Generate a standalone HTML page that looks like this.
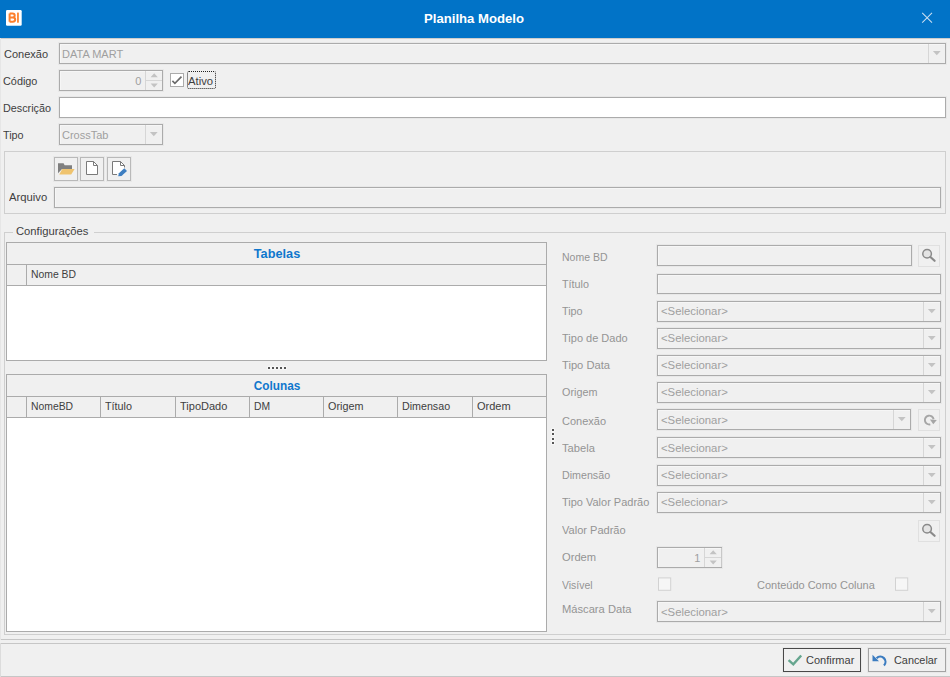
<!DOCTYPE html>
<html>
<head>
<meta charset="utf-8">
<title>Planilha Modelo</title>
<style>
html,body{margin:0;padding:0;}
body{width:950px;height:677px;overflow:hidden;background:#f0f0f0;font-family:"Liberation Sans",sans-serif;font-size:12px;color:#3c3c3c;position:relative;}
*{box-sizing:border-box;}
.a{position:absolute;}
.t{position:absolute;white-space:nowrap;line-height:14px;height:14px;}
.tb{left:0;top:0;width:950px;height:38px;background:#0173c7;}
.in{border:1px solid #ababab;background:#f0f0f0;box-shadow:0 0 0 1px rgba(0,0,0,0.03),inset 1px 1px 0 #f6f6f6;}
.in.w{background:#fff;box-shadow:0 0 0 1px rgba(0,0,0,0.03);}
.grp{border:1px solid #cfcfcf;}
.btn{border:1px solid #b9b9b9;background:#f0f0f0;box-shadow:0 0 0 1px rgba(0,0,0,0.03);}
.sb{border:1px solid #e0e0e0;background:#f0f0f0;}
.ln{background:#c6c6c6;}
.grid{border:1px solid #ababab;background:#fff;}
.cb{border:1px solid #d4d4d4;background:#f6f6f6;}
.dot{position:absolute;width:2px;height:2px;background:#555;box-shadow:0 0 1px 1px rgba(255,255,255,0.5);}
</style>
</head>
<body>
<div class="a tb"></div>
<div class="t" style="top:12px;color:#fff;font-size:12.5px;font-weight:bold;left:323.9px;width:300px;text-align:center;transform:scaleX(1.05);transform-origin:50% 0;">Planilha Modelo</div>
<svg class="a" style="left:0;top:0;" width="40" height="38" viewBox="0 0 40 38">
<rect x="6" y="10" width="15.7" height="15.7" rx="1.2" fill="#fff"/>
<path d="M9.6 13.6 V21.7 M9.6 13.6 H12.5 C14.3 13.6 14.7 14.6 14.7 15.5 C14.7 16.4 14.3 17.45 12.5 17.45 H9.6 M12.5 17.45 H12.9 C14.8 17.45 15.2 18.6 15.2 19.55 C15.2 20.5 14.8 21.7 12.9 21.7 H9.6" stroke="#fd7f2c" stroke-width="2" fill="none" stroke-linejoin="miter"/>
<rect x="17" y="12.6" width="1.9" height="10.1" fill="#fd8b3c"/>
</svg>
<svg class="a" style="left:921px;top:12px;" width="13" height="13" viewBox="0 0 13 13"><path d="M1.2 0.9 L11 10.7 M11 0.9 L1.2 10.7" stroke="#c9def1" stroke-width="1.05" fill="none"/></svg>
<div class="t" style="top:47px;color:#3e3e3e;font-size:11.5px;left:3.5px;transform:scaleX(0.9569);transform-origin:0 0;">Conexão</div>
<div class="a in" style="left:59px;top:43px;width:887px;height:21px;"></div>
<div class="a" style="left:928px;top:44px;width:1px;height:19px;background:#d6d6d6;"></div>
<svg class="a" style="left:928px;top:43px;" width="18" height="21" viewBox="0 0 18 21"><path d="M4.9 8.1 H12.700000000000001 L8.8 12.3 Z" fill="#c3c3c3"/></svg>
<div class="t" style="top:47px;color:#9f9f9f;font-size:11.5px;left:62px;transform:scaleX(0.9569);transform-origin:0 0;">DATA MART</div>
<div class="t" style="top:74px;color:#3e3e3e;font-size:11.5px;left:3.4px;transform:scaleX(0.9443);transform-origin:0 0;">Código</div>
<div class="a in" style="left:59px;top:70px;width:104px;height:21px;"></div>
<div class="a" style="left:145px;top:71px;width:1px;height:19px;background:#d6d6d6;"></div>
<div class="a" style="left:146px;top:80px;width:16px;height:1px;background:#d6d6d6;"></div>
<svg class="a" style="left:145px;top:70px;" width="18" height="21" viewBox="0 0 18 21"><path d="M5.6 7.2 H12.8 L9.2 3.2 Z M5.6 13.6 H12.8 L9.2 17.6 Z" fill="#c3c3c3"/></svg>
<div class="t" style="top:74px;color:#9f9f9f;font-size:11.5px;right:808.5px;transform:scaleX(0.9569);transform-origin:100% 0;">0</div>
<div class="a" style="left:170px;top:73px;width:14px;height:14px;border:1px solid #ababab;background:#fff;"></div>
<svg class="a" style="left:170px;top:73px;" width="14" height="14" viewBox="0 0 14 14"><path d="M2.4 7.9 L4.9 10.4 L11.5 3.6" stroke="#6a6a6a" stroke-width="1.6" fill="none"/></svg>
<div class="a" style="left:187px;top:71px;width:29px;height:18px;border:1px dotted #222;border-radius:2px;"></div>
<div class="t" style="top:74px;color:#3e3e3e;font-size:11.5px;left:188px;transform:scaleX(0.9809);transform-origin:0 0;">Ativo</div>
<div class="t" style="top:101px;color:#3e3e3e;font-size:11.5px;left:3.4px;transform:scaleX(0.9391);transform-origin:0 0;">Descrição</div>
<div class="a in w" style="left:59px;top:97px;width:887px;height:21px;"></div>
<div class="t" style="top:128px;color:#3e3e3e;font-size:11.5px;left:3.4px;transform:scaleX(0.9391);transform-origin:0 0;">Tipo</div>
<div class="a in" style="left:59px;top:124px;width:104px;height:21px;"></div>
<div class="a" style="left:145px;top:125px;width:1px;height:19px;background:#d6d6d6;"></div>
<svg class="a" style="left:145px;top:124px;" width="18" height="21" viewBox="0 0 18 21"><path d="M4.9 8.1 H12.700000000000001 L8.8 12.3 Z" fill="#c3c3c3"/></svg>
<div class="t" style="top:128px;color:#9f9f9f;font-size:11.5px;left:62px;transform:scaleX(0.9569);transform-origin:0 0;">CrossTab</div>
<div class="a grp" style="left:4px;top:151px;width:942px;height:63px;"></div>
<div class="a btn" style="left:54px;top:157px;width:24px;height:24px;"></div>
<div class="a btn" style="left:80px;top:157px;width:24px;height:24px;"></div>
<div class="a btn" style="left:107px;top:157px;width:24px;height:24px;"></div>
<svg class="a" style="left:54px;top:157px;" width="80" height="24" viewBox="54 157 80 24">
  <path d="M58 163.2 H63.6 L64.6 165.3 H72 V169 H62 L58 173.2 Z" fill="#7f7f7f"/>
  <path d="M62.3 169.1 H74.6 L71.2 174.6 H59.2 Z" fill="#efc36e"/>
  <path d="M86.5 161.5 H93.5 L97.5 165.5 V174.5 H86.5 Z" fill="#fff" stroke="#7a7a7a" stroke-width="1"/>
  <path d="M93.5 161.5 V165.5 H97.5" fill="none" stroke="#7a7a7a" stroke-width="1"/>
  <path d="M112.5 161.5 H120.5 L124.5 165.5 V174.5 H112.5 Z" fill="#fff"/>
  <path d="M117 174.5 H112.5 V161.5 H120.5 L124.5 165.5 V167.5 M120.5 161.5 V165.5 H124.5" fill="none" stroke="#7a7a7a" stroke-width="1"/>
  <path d="M118.2 176.3 L118.9 173.2 L124.3 168.2 L127 170.9 L121.5 176 Z" fill="#3f7fc1"/>
</svg>
<div class="t" style="top:190px;color:#3e3e3e;font-size:11.5px;left:9px;transform:scaleX(0.9809);transform-origin:0 0;">Arquivo</div>
<div class="a in" style="left:54px;top:187px;width:887px;height:21px;"></div>
<div class="a grp" style="left:4px;top:232px;width:942px;height:403px;"></div>
<div class="a" style="left:13px;top:232px;width:81px;height:1px;background:#f0f0f0;"></div>
<div class="t" style="top:224px;color:#3e3e3e;font-size:11.5px;left:16px;transform:scaleX(0.9757);transform-origin:0 0;">Configurações</div>
<div class="a grid" style="left:6px;top:242px;width:541px;height:119px;"></div>
<div class="a" style="left:7px;top:243px;width:539px;height:43px;background:#f0f0f0;"></div>
<div class="a" style="left:7px;top:264px;width:539px;height:1px;background:#ababab;"></div>
<div class="a" style="left:7px;top:285px;width:539px;height:1px;background:#ababab;"></div>
<div class="t" style="top:247px;color:#0f77cd;font-size:12px;font-weight:bold;left:127.0px;width:300px;text-align:center;transform:scaleX(1.06);transform-origin:50% 0;">Tabelas</div>
<div class="a" style="left:26px;top:265px;width:1px;height:20px;background:#ababab;"></div>
<div class="t" style="top:267px;color:#3e3e3e;font-size:11px;left:30.5px;transform:scaleX(0.9447);transform-origin:0 0;">Nome BD</div>
<div class="dot" style="left:268px;top:367px;"></div>
<div class="dot" style="left:272px;top:367px;"></div>
<div class="dot" style="left:276px;top:367px;"></div>
<div class="dot" style="left:280px;top:367px;"></div>
<div class="dot" style="left:284px;top:367px;"></div>
<div class="a grid" style="left:6px;top:374px;width:541px;height:258px;"></div>
<div class="a" style="left:7px;top:375px;width:539px;height:43px;background:#f0f0f0;"></div>
<div class="a" style="left:7px;top:396px;width:539px;height:1px;background:#ababab;"></div>
<div class="a" style="left:7px;top:417px;width:539px;height:1px;background:#ababab;"></div>
<div class="t" style="top:379px;color:#0f77cd;font-size:12px;font-weight:bold;left:127.0px;width:300px;text-align:center;transform:scaleX(0.983);transform-origin:50% 0;">Colunas</div>
<div class="a" style="left:26px;top:397px;width:1px;height:20px;background:#ababab;"></div>
<div class="t" style="top:399px;color:#3e3e3e;font-size:11px;left:30.5px;transform:scaleX(0.9436);transform-origin:0 0;">NomeBD</div>
<div class="a" style="left:100px;top:397px;width:1px;height:20px;background:#ababab;"></div>
<div class="t" style="top:399px;color:#3e3e3e;font-size:11px;left:104.5px;transform:scaleX(0.9818);transform-origin:0 0;">Título</div>
<div class="a" style="left:175px;top:397px;width:1px;height:20px;background:#ababab;"></div>
<div class="t" style="top:399px;color:#3e3e3e;font-size:11px;left:179.5px;transform:scaleX(1.0004);transform-origin:0 0;">TipoDado</div>
<div class="a" style="left:249px;top:397px;width:1px;height:20px;background:#ababab;"></div>
<div class="t" style="top:399px;color:#3e3e3e;font-size:11px;left:253.5px;transform:scaleX(0.9382);transform-origin:0 0;">DM</div>
<div class="a" style="left:323px;top:397px;width:1px;height:20px;background:#ababab;"></div>
<div class="t" style="top:399px;color:#3e3e3e;font-size:11px;left:327.5px;transform:scaleX(0.9818);transform-origin:0 0;">Origem</div>
<div class="a" style="left:397px;top:397px;width:1px;height:20px;background:#ababab;"></div>
<div class="t" style="top:399px;color:#3e3e3e;font-size:11px;left:401.5px;transform:scaleX(0.9709);transform-origin:0 0;">Dimensao</div>
<div class="a" style="left:472px;top:397px;width:1px;height:20px;background:#ababab;"></div>
<div class="t" style="top:399px;color:#3e3e3e;font-size:11px;left:476.5px;transform:scaleX(1.0004);transform-origin:0 0;">Ordem</div>
<div class="dot" style="left:552px;top:429px;"></div>
<div class="dot" style="left:552px;top:433px;"></div>
<div class="dot" style="left:552px;top:438px;"></div>
<div class="dot" style="left:552px;top:442px;"></div>
<div class="t" style="top:250px;color:#949494;font-size:11px;left:562.2px;transform:scaleX(0.9545);transform-origin:0 0;">Nome BD</div>
<div class="a in" style="left:657px;top:245px;width:255px;height:21px;"></div>
<div class="a sb" style="left:918px;top:245px;width:22px;height:22px;"></div>
<svg class="a" style="left:918px;top:245px;" width="22" height="22" viewBox="918 245 22 22"><circle cx="927.1" cy="253.7" r="4.3" fill="#e4e4e4" stroke="#8a8a8a" stroke-width="1.5"/><path d="M930.4 257 L934.6 260.8" stroke="#8a8a8a" stroke-width="2.2" stroke-linecap="round"/></svg>
<div class="t" style="top:277px;color:#949494;font-size:11px;left:562.2px;transform:scaleX(0.9818);transform-origin:0 0;">Título</div>
<div class="a in" style="left:657px;top:274px;width:284px;height:20px;"></div>
<div class="t" style="top:304px;color:#949494;font-size:11px;left:562.2px;transform:scaleX(0.9818);transform-origin:0 0;">Tipo</div>
<div class="a in" style="left:657px;top:301px;width:284px;height:21px;"></div>
<div class="a" style="left:923px;top:302px;width:1px;height:19px;background:#d6d6d6;"></div>
<svg class="a" style="left:923px;top:301px;" width="18" height="21" viewBox="0 0 18 21"><path d="M4.9 8.1 H12.700000000000001 L8.8 12.3 Z" fill="#c3c3c3"/></svg>
<div class="t" style="top:304px;color:#9f9f9f;font-size:11px;left:661.4px;transform:scaleX(1.0309);transform-origin:0 0;">&lt;Selecionar&gt;</div>
<div class="t" style="top:331px;color:#949494;font-size:11px;left:562.2px;transform:scaleX(1.0004);transform-origin:0 0;">Tipo de Dado</div>
<div class="a in" style="left:657px;top:328px;width:284px;height:21px;"></div>
<div class="a" style="left:923px;top:329px;width:1px;height:19px;background:#d6d6d6;"></div>
<svg class="a" style="left:923px;top:328px;" width="18" height="21" viewBox="0 0 18 21"><path d="M4.9 8.1 H12.700000000000001 L8.8 12.3 Z" fill="#c3c3c3"/></svg>
<div class="t" style="top:331px;color:#9f9f9f;font-size:11px;left:661.4px;transform:scaleX(1.0309);transform-origin:0 0;">&lt;Selecionar&gt;</div>
<div class="t" style="top:358px;color:#949494;font-size:11px;left:562.2px;transform:scaleX(1.0145);transform-origin:0 0;">Tipo Data</div>
<div class="a in" style="left:657px;top:355px;width:284px;height:21px;"></div>
<div class="a" style="left:923px;top:356px;width:1px;height:19px;background:#d6d6d6;"></div>
<svg class="a" style="left:923px;top:355px;" width="18" height="21" viewBox="0 0 18 21"><path d="M4.9 8.1 H12.700000000000001 L8.8 12.3 Z" fill="#c3c3c3"/></svg>
<div class="t" style="top:358px;color:#9f9f9f;font-size:11px;left:661.4px;transform:scaleX(1.0309);transform-origin:0 0;">&lt;Selecionar&gt;</div>
<div class="t" style="top:385px;color:#949494;font-size:11px;left:562.2px;transform:scaleX(0.9818);transform-origin:0 0;">Origem</div>
<div class="a in" style="left:657px;top:382px;width:284px;height:21px;"></div>
<div class="a" style="left:923px;top:383px;width:1px;height:19px;background:#d6d6d6;"></div>
<svg class="a" style="left:923px;top:382px;" width="18" height="21" viewBox="0 0 18 21"><path d="M4.9 8.1 H12.700000000000001 L8.8 12.3 Z" fill="#c3c3c3"/></svg>
<div class="t" style="top:385px;color:#9f9f9f;font-size:11px;left:661.4px;transform:scaleX(1.0309);transform-origin:0 0;">&lt;Selecionar&gt;</div>
<div class="t" style="top:414px;color:#949494;font-size:11px;left:562.2px;transform:scaleX(1.0004);transform-origin:0 0;">Conexão</div>
<div class="a in" style="left:657px;top:409px;width:254px;height:21px;"></div>
<div class="a" style="left:893px;top:410px;width:1px;height:19px;background:#d6d6d6;"></div>
<svg class="a" style="left:893px;top:409px;" width="18" height="21" viewBox="0 0 18 21"><path d="M4.9 8.1 H12.700000000000001 L8.8 12.3 Z" fill="#c3c3c3"/></svg>
<div class="t" style="top:413px;color:#9f9f9f;font-size:11px;left:661.4px;transform:scaleX(1.0309);transform-origin:0 0;">&lt;Selecionar&gt;</div>
<div class="a sb" style="left:918px;top:409px;width:22px;height:22px;"></div>
<svg class="a" style="left:918px;top:409px;" width="22" height="22" viewBox="918 409 22 22"><path d="M933.6 419.2 A4.4 4.4 0 1 0 930.3 424.3" stroke="#a6a6a6" stroke-width="1.9" fill="none"/><path d="M929.9 419.5 L936.8 420 L933.3 424.2 Z" fill="#a6a6a6"/></svg>
<div class="t" style="top:441px;color:#949494;font-size:11px;left:562.2px;transform:scaleX(1.0145);transform-origin:0 0;">Tabela</div>
<div class="a in" style="left:657px;top:437px;width:284px;height:21px;"></div>
<div class="a" style="left:923px;top:438px;width:1px;height:19px;background:#d6d6d6;"></div>
<svg class="a" style="left:923px;top:437px;" width="18" height="21" viewBox="0 0 18 21"><path d="M4.9 8.1 H12.700000000000001 L8.8 12.3 Z" fill="#c3c3c3"/></svg>
<div class="t" style="top:441px;color:#9f9f9f;font-size:11px;left:661.4px;transform:scaleX(1.0309);transform-origin:0 0;">&lt;Selecionar&gt;</div>
<div class="t" style="top:468px;color:#949494;font-size:11px;left:562.2px;transform:scaleX(0.9709);transform-origin:0 0;">Dimensão</div>
<div class="a in" style="left:657px;top:465px;width:284px;height:21px;"></div>
<div class="a" style="left:923px;top:466px;width:1px;height:19px;background:#d6d6d6;"></div>
<svg class="a" style="left:923px;top:465px;" width="18" height="21" viewBox="0 0 18 21"><path d="M4.9 8.1 H12.700000000000001 L8.8 12.3 Z" fill="#c3c3c3"/></svg>
<div class="t" style="top:468px;color:#9f9f9f;font-size:11px;left:661.4px;transform:scaleX(1.0309);transform-origin:0 0;">&lt;Selecionar&gt;</div>
<div class="t" style="top:495px;color:#949494;font-size:11px;left:562.2px;transform:scaleX(0.9982);transform-origin:0 0;">Tipo Valor Padrão</div>
<div class="a in" style="left:657px;top:492px;width:284px;height:21px;"></div>
<div class="a" style="left:923px;top:493px;width:1px;height:19px;background:#d6d6d6;"></div>
<svg class="a" style="left:923px;top:492px;" width="18" height="21" viewBox="0 0 18 21"><path d="M4.9 8.1 H12.700000000000001 L8.8 12.3 Z" fill="#c3c3c3"/></svg>
<div class="t" style="top:495px;color:#9f9f9f;font-size:11px;left:661.4px;transform:scaleX(1.0309);transform-origin:0 0;">&lt;Selecionar&gt;</div>
<div class="t" style="top:523px;color:#949494;font-size:11px;left:562.2px;transform:scaleX(1.0036);transform-origin:0 0;">Valor Padrão</div>
<div class="a sb" style="left:918px;top:520px;width:22px;height:22px;"></div>
<svg class="a" style="left:918px;top:520px;" width="22" height="22" viewBox="918 245 22 22"><circle cx="927.1" cy="253.7" r="4.3" fill="#e4e4e4" stroke="#8a8a8a" stroke-width="1.5"/><path d="M930.4 257 L934.6 260.8" stroke="#8a8a8a" stroke-width="2.2" stroke-linecap="round"/></svg>
<div class="t" style="top:550px;color:#949494;font-size:11px;left:562.2px;transform:scaleX(1.0145);transform-origin:0 0;">Ordem</div>
<div class="a in" style="left:657px;top:547px;width:65px;height:21px;"></div>
<div class="a" style="left:704px;top:548px;width:1px;height:19px;background:#d6d6d6;"></div>
<div class="a" style="left:705px;top:557px;width:16px;height:1px;background:#d6d6d6;"></div>
<svg class="a" style="left:704px;top:547px;" width="18" height="21" viewBox="0 0 18 21"><path d="M5.6 7.2 H12.8 L9.2 3.2 Z M5.6 13.6 H12.8 L9.2 17.6 Z" fill="#c3c3c3"/></svg>
<div class="t" style="top:551px;color:#9f9f9f;font-size:11.5px;right:249.5px;transform:scaleX(0.9569);transform-origin:100% 0;">1</div>
<div class="a" style="left:721px;top:548px;width:1px;height:19px;background:#c8c8c8;"></div>
<div class="t" style="top:578px;color:#949494;font-size:11px;left:562.2px;transform:scaleX(0.9491);transform-origin:0 0;">Visível</div>
<svg class="a" style="left:655px;top:574px;" width="20" height="20" viewBox="655 574 20 20"><rect x="658.5" y="577.9" width="12.2" height="12.4" fill="#f6f6f6" stroke="#d2d2d2" stroke-width="1"/></svg>
<div class="t" style="top:578px;color:#949494;font-size:11px;left:757px;transform:scaleX(0.9982);transform-origin:0 0;">Conteúdo Como Coluna</div>
<svg class="a" style="left:892px;top:574px;" width="20" height="20" viewBox="892 574 20 20"><rect x="895.5" y="577.9" width="12.2" height="12.4" fill="#f6f6f6" stroke="#d2d2d2" stroke-width="1"/></svg>
<div class="t" style="top:602px;color:#949494;font-size:11px;left:562.2px;transform:scaleX(1.0145);transform-origin:0 0;">Máscara Data</div>
<div class="a in" style="left:657px;top:601px;width:284px;height:21px;"></div>
<div class="a" style="left:923px;top:602px;width:1px;height:19px;background:#d6d6d6;"></div>
<svg class="a" style="left:923px;top:601px;" width="18" height="21" viewBox="0 0 18 21"><path d="M4.9 8.1 H12.700000000000001 L8.8 12.3 Z" fill="#c3c3c3"/></svg>
<div class="t" style="top:605px;color:#9f9f9f;font-size:11px;left:661.4px;transform:scaleX(1.0309);transform-origin:0 0;">&lt;Selecionar&gt;</div>
<div class="a" style="left:0;top:38px;width:950px;height:1px;background:#cdcdcd;"></div>
<div class="a ln" style="left:0;top:639px;width:950px;height:1px;"></div>
<div class="a ln" style="left:0;top:643px;width:950px;height:1px;"></div>
<div class="a ln" style="left:0;top:676px;width:950px;height:1px;"></div>
<div class="a" style="left:0;top:38px;width:1px;height:602px;background:#e6e6e6;"></div>
<div class="a" style="left:0;top:643px;width:1px;height:34px;background:#dcdcdc;"></div>
<div class="a btn" style="left:783px;top:648px;width:78px;height:24px;border-color:#484848;"></div>
<svg class="a" style="left:783px;top:648px;" width="24" height="24" viewBox="783 648 24 24"><path d="M788.6 660.2 L793.3 664.4 L801.2 655.5" stroke="#66a68f" stroke-width="2.4" fill="none"/></svg>
<div class="t" style="top:653px;color:#3e3e3e;font-size:11.5px;left:806px;transform:scaleX(0.9569);transform-origin:0 0;">Confirmar</div>
<div class="a btn" style="left:868px;top:648px;width:78px;height:24px;border-color:#a3a3a3;"></div>
<svg class="a" style="left:868px;top:648px;" width="24" height="24" viewBox="868 648 24 24"><path d="M872.5 654.7 V661.2 H879 Z" fill="#3b7cc0"/><path d="M876.6 658.2 A4.9 4.9 0 1 1 884 665.4" stroke="#3b7cc0" stroke-width="2.2" fill="none"/></svg>
<div class="t" style="top:653px;color:#3e3e3e;font-size:11.5px;left:894.4px;transform:scaleX(0.9443);transform-origin:0 0;">Cancelar</div>
</body>
</html>
